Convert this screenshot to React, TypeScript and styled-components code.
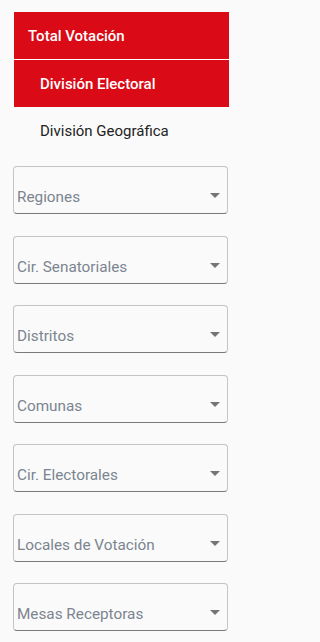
import React from 'react';
import styled, { createGlobalStyle } from 'styled-components';

const GlobalStyle = createGlobalStyle`
  body {
    margin: 0;
    background: #fafafa;
    font-family: Roboto, "Liberation Sans", sans-serif;
  }
`;

const filters = [
  'Regiones',
  'Cir. Senatoriales',
  'Distritos',
  'Comunas',
  'Cir. Electorales',
  'Locales de Votación',
  'Mesas Receptoras',
];

const Page = styled.div`
  padding: 12px 11px 0 13px;
  width: 216px;
`;

const Menu = styled.ul`
  list-style: none;
  margin: 0 0 0 1px;
  padding: 0;
  width: 215px;
`;

const MenuItem = styled.li<{ $active?: boolean; $indent?: boolean; $divider?: boolean }>`
  box-sizing: border-box;
  display: flex;
  align-items: center;
  height: ${(p) => (p.$divider ? '48px' : '47px')};
  padding-left: ${(p) => (p.$indent ? '26px' : '14px')};
  background: ${(p) => (p.$active ? '#da0a16' : 'transparent')};
  color: ${(p) => (p.$active ? '#ffffff' : '#222222')};
  border-top: ${(p) => (p.$divider ? '1px solid #ffffff' : 'none')};
  font-size: 15px;
  font-weight: ${(p) => (p.$active ? 500 : 400)};
`;

const Filters = styled.div`
  display: flex;
  flex-direction: column;
  gap: 21.5px;
  margin-top: 12px;
`;

const Select = styled.div`
  box-sizing: border-box;
  display: flex;
  align-items: flex-end;
  justify-content: space-between;
  height: 48px;
  width: 215px;
  padding: 0 7px 6px 3px;
  border: 1px solid #c4c4c4;
  border-bottom-color: #7a7a7a;
  border-radius: 4px;
  background: #fafafa;
`;

const Label = styled.span`
  font-size: 15.3px;
  color: #7b8590;
  line-height: 20px;
`;

const Arrow = styled.svg`
  width: 10px;
  height: 5px;
  margin-bottom: 9px;
  fill: #757575;
`;

export default function App() {
  return (
    <>
      <GlobalStyle />
      <Page>
        <Menu>
          <MenuItem $active>Total Votación</MenuItem>
          <MenuItem $active $indent $divider>División Electoral</MenuItem>
          <MenuItem $indent>División Geográfica</MenuItem>
        </Menu>
        <Filters>
          {filters.map((name) => (
            <Select key={name}>
              <Label>{name}</Label>
              <Arrow viewBox="0 0 10 5">
                <path d="M0 0l5 5 5-5z" />
              </Arrow>
            </Select>
          ))}
        </Filters>
      </Page>
    </>
  );
}
